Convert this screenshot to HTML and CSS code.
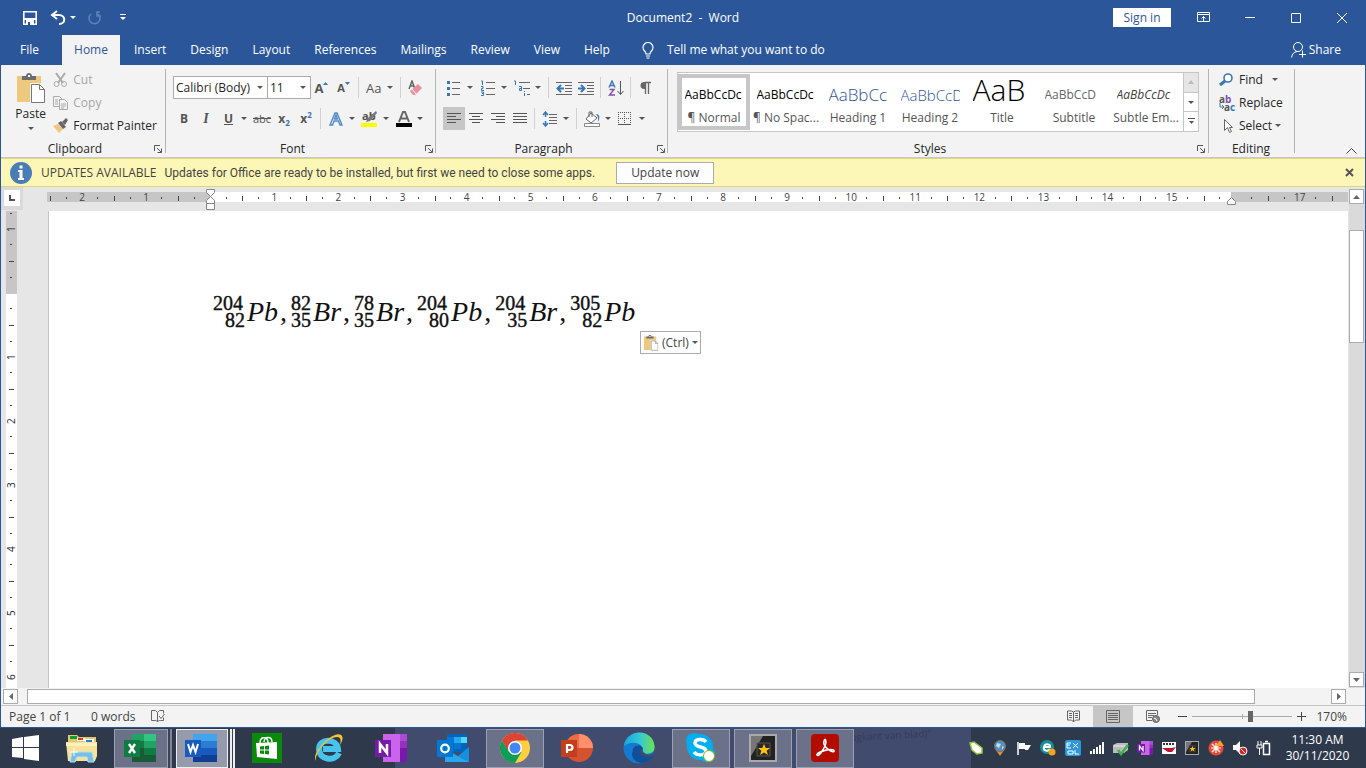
FILE: index.html
```html
<!DOCTYPE html>
<html lang="en">
<head>
<meta charset="utf-8">
<title>Document2 - Word</title>
<link rel="stylesheet" href="styles.css">
</head>
<body>
<svg class="defs" aria-hidden="true">
  <symbol id="launch" viewBox="0 0 8 8"><path d="M.5 6V.5H6M3 3l4 4M7.500 3.500v4h-4" fill="none" stroke="#555"/></symbol>
  <symbol id="clip" viewBox="0 0 28 31"><path d="M0 3h24v26H0z" fill="#edc87e"/><path d="M5 7V3h4c0-4 6-4 6 0h4v4z" fill="#6d6d6d"/><path d="M11 2h2v2h-2z" fill="#fff"/><path d="M13 10h11l5 5v17H13z" fill="#f3f3f3"/><path d="M14.500 11.500h8l5 5v13h-13z" fill="#fff" stroke="#777"/><path d="M22.500 11.500v5h5" fill="none" stroke="#777"/></symbol>
  <symbol id="note" viewBox="0 0 32 28"><path d="M8 0h24v28H8z" fill="#ca64ea"/><path d="M25 0h7v7h-7z" fill="#ae4bd5"/><path d="M25 7h7v7h-7z" fill="#9332bf"/><path d="M25 14h7v14h-7z" fill="#7719aa"/><path d="M0 6h16v17H0z" fill="#7719aa"/><path d="M5 19V10l7 9v-9" fill="none" stroke="#fff" stroke-width="2.500"/></symbol>
  <symbol id="photo" viewBox="0 0 28 28"><path d="M0 0h28v28H0z" fill="#aaa"/><path d="M2 2h24v24H2z" fill="#222"/><path d="M2 2h12L2 22z" fill="#777"/><path d="M8 9h13v13H8z" fill="#292929" stroke="#555"/><path d="m15 10 1.700 4H21l-3.400 2.800L19 21l-4-2.500L11 21l1.400-4.200L9 14h4.300z" fill="#ffc20e"/></symbol>
</svg>

<div class="window">
  <header class="titlebar">
    <div class="quick">
      <button aria-label="Save"><svg width="14" height="14"><path d="M.8.800h12.400v12.400H.8z" fill="none" stroke="#fff" stroke-width="1.600"/><path d="M1 7h12v2H1z" fill="#fff"/><path d="M3 9h8v5H3z" fill="#fff"/><path d="M5 11h2v3H5z" fill="#2b579a"/></svg></button>
      <button aria-label="Undo" class="undo"><svg width="26" height="16"><path d="M7 1 2 5l5 4M2 5h7c7 0 7 9 0 9" fill="none" stroke="#fff" stroke-width="2"/><path d="M20 6h6l-3 3z" fill="#fff"/></svg></button>
      <button aria-label="Repeat" class="redo"><svg width="14" height="14"><path d="M3 3a5.500 5.500 0 1 0 7 0M12 1H9v4h4" fill="none" stroke="#5f80b5" stroke-width="1.600"/></svg></button>
      <button aria-label="Customize quick access toolbar"><svg width="6" height="7"><path d="M0 0h6v1H0zM0 3h6L3 6z" fill="#fff"/></svg></button>
    </div>
    <h1 class="doc-name">Document2&nbsp; -&nbsp; Word</h1>
    <div class="wincontrols">
      <button class="signin">Sign in</button>
      <button aria-label="Ribbon display options" class="ribbon-opts"><svg width="13" height="11"><path d="M.5.500h12v9H.5zM.5 2.500h12M6.500 9V4.500M4.500 6.500l2-2 2 2" fill="none" stroke="#fff"/></svg></button>
      <button aria-label="Minimize"><svg width="10" height="10"><path d="M0 4.500h10" stroke="#fff"/></svg></button>
      <button aria-label="Maximize"><svg width="10" height="10"><path d="M.5.500h9v9h-9z" fill="none" stroke="#fff"/></svg></button>
      <button aria-label="Close"><svg width="10" height="10"><path d="m0 0 10 10M10 0 0 10" stroke="#fff"/></svg></button>
    </div>
  </header>

  <nav class="tabs">
    <button class="file">File</button><button class="active">Home</button><button>Insert</button><button>Design</button><button>Layout</button><button>References</button><button>Mailings</button><button>Review</button><button>View</button><button>Help</button>
    <button class="tell"><svg width="12" height="17"><path d="M4 12c0-3-3-3-3-6.500a5 5 0 0 1 10 0C11 9 8 9 8 12zM4 14h4M4.500 16h3" fill="none" stroke="#fff" stroke-width="1.200"/></svg>Tell me what you want to do</button>
    <button class="share"><svg width="15" height="16"><circle cx="7" cy="5" r="4.500" fill="none" stroke="#fff"/><path d="M.5 15.500C1 12 3 10 6 9.500M11.500 8.500v7M8 12.500h7" fill="none" stroke="#fff"/></svg>Share</button>
  </nav>

  <div class="ribbon">
    <section class="group clipboard">
      <div class="body">
        <button class="paste"><svg width="28" height="31"><use href="#clip"/></svg><span>Paste</span><i class="caret"></i></button>
        <div class="stack">
          <button class="off"><svg width="16" height="16"><path d="M3 1l7 10M12 1 5 11" stroke="#aaa" stroke-width="2"/><circle cx="3.500" cy="12" r="2.500" fill="none" stroke="#aaa"/><circle cx="11" cy="12" r="2.500" fill="none" stroke="#aaa"/></svg>Cut</button>
          <button class="off"><svg width="16" height="16"><path d="M.5 1.500h6l2 2v8h-8z" fill="#f3f3f3" stroke="#aaa"/><path d="M6.500 4.500h5l3 3v7h-8z" fill="#f3f3f3" stroke="#aaa"/><path d="M2 5h3M2 7h3M2 9h3M8 9h5M8 11h5M8 13h3" stroke="#aaa"/></svg>Copy</button>
          <button><svg width="16" height="16"><path d="m0 8 5-2 5 5-4 4z" fill="#edc87e"/><path d="m5 5 3-2 5 6-3 2zM9 4l4-4 2 2-3 5z" fill="#666"/></svg>Format Painter</button>
        </div>
      </div>
      <footer><span>Clipboard</span><svg width="8" height="8"><use href="#launch"/></svg></footer>
    </section>

    <section class="group font">
      <div class="body rows">
        <div class="row">
          <label class="combo family"><select aria-label="Font"><option>Calibri (Body)</option></select><i class="caret"></i></label>
          <label class="combo size"><select aria-label="Font size"><option>11</option></select><i class="caret"></i></label>
          <button class="tool grow" aria-label="Increase font size"><b>A</b><svg width="6" height="12"><path d="M0 3h5L2.500 0z" fill="#3a76b5"/></svg></button>
          <button class="tool shrink" aria-label="Decrease font size"><b>A</b><svg width="6" height="12"><path d="M0 0h5L2.500 3z" fill="#3a76b5"/></svg></button>
          <i class="sep"></i>
          <button class="tool drop case"><span>Aa</span><i class="caret"></i></button>
          <i class="sep"></i>
          <button class="tool" aria-label="Clear formatting"><svg width="16" height="16"><path d="m1 9 3-8 3 8M2 6h4" fill="none" stroke="#666" stroke-width="1.500"/><path d="m2 11 8-7 4 4-7 7H5z" fill="#ea8e98"/><path d="m4 9 4 5" stroke="#fff"/></svg></button>
        </div>
        <div class="row">
          <button class="tool"><b>B</b></button><button class="tool ital"><b>I</b></button><button class="tool drop under"><b>U</b><i class="caret"></i></button>
          <button class="tool strike">abc</button><button class="tool script"><b>x<sub>2</sub></b></button><button class="tool script"><b>x<sup>2</sup></b></button>
          <i class="sep"></i>
          <button class="tool drop" aria-label="Text effects"><svg width="16" height="16"><path d="m2 14 5-12h2l5 12h-2l-1.500-4H6L4.500 14zm4.500-6h3L8 4z" fill="#fff" stroke="#4e8ac8" stroke-width="1.400"/></svg><i class="caret"></i></button>
          <button class="tool drop" aria-label="Highlight colour"><span class="ab">ab</span><svg width="16" height="16"><path d="m15 0-8 7-2 4 4-1 7-8z" fill="#777"/><path d="M0 12h16v4H0z" fill="#ff0"/></svg><i class="caret"></i></button>
          <button class="tool drop" aria-label="Font colour"><svg width="16" height="16"><path d="m3 11 4-10h2l4 10M5 7.500h6" fill="none" stroke="#666" stroke-width="2"/><path d="M0 12h16v4H0z"/></svg><i class="caret"></i></button>
        </div>
      </div>
      <footer><span>Font</span><svg width="8" height="8"><use href="#launch"/></svg></footer>
    </section>

    <section class="group para">
      <div class="body rows">
        <div class="row">
          <button class="tool drop" aria-label="Bullets"><svg width="16" height="16"><path d="M6 2.500h8M6 8.500h8M6 14.500h8" stroke="#666"/><path d="M1 1h3v3H1zM1 7h3v3H1zM1 13h3v3H1z" fill="#3a76b5"/></svg><i class="caret"></i></button>
          <button class="tool drop" aria-label="Numbering"><svg width="16" height="16"><path d="M6 2.500h9M6 8.500h9M6 14.500h9" stroke="#666"/><path d="M1 1h1.500v4M1 6.500h2v2H1.500v2H4M1 12h2.500v3.500H1M2 13.500h1" fill="none" stroke="#3a76b5"/></svg><i class="caret"></i></button>
          <button class="tool drop" aria-label="Multilevel list"><svg width="16" height="16"><path d="M5 2.500h11M9 8.500h7M13 14.500h3" stroke="#666"/><path d="M0 1h1.500v4M5 6.500h2.500v4H5.500v-2h2M10.500 11v1M10.500 13v3" fill="none" stroke="#3a76b5"/></svg><i class="caret"></i></button>
          <i class="sep"></i>
          <button class="tool" aria-label="Decrease indent"><svg width="16" height="16"><path d="M0 2.500h16M9 5.500h7M9 8.500h7M9 11.500h7M0 14.500h16" stroke="#666"/><path d="M8 8.500H2M5 5 1.500 8.500 5 12" fill="none" stroke="#3a76b5" stroke-width="2"/></svg></button>
          <button class="tool" aria-label="Increase indent"><svg width="16" height="16"><path d="M0 2.500h16M9 5.500h7M9 8.500h7M9 11.500h7M0 14.500h16" stroke="#666"/><path d="M0 8.500h6M3 5l3.500 3.500L3 12" fill="none" stroke="#3a76b5" stroke-width="2"/></svg></button>
          <i class="sep"></i>
          <button class="tool" aria-label="Sort"><svg width="16" height="16"><path d="M1 7.500 4 1l3 6.500M2 5.500h4" fill="none" stroke="#3a76b5" stroke-width="1.400"/><path d="M1.500 9.500H6L1.500 15H7" fill="none" stroke="#8052a8" stroke-width="1.400"/><path d="M12.500 1v13M9.500 11l3 3.500 3-3.500" fill="none" stroke="#555"/></svg></button>
          <i class="sep"></i>
          <button class="tool" aria-label="Show paragraph marks"><svg width="12" height="14"><path d="M11 1.500H5M5.500 1v12M8.500 1v12" stroke="#666" stroke-width="1.300"/><path d="M6 1H4a3 3 0 0 0 0 7h2z" fill="#666"/></svg></button>
        </div>
        <div class="row">
          <button class="tool selected" aria-label="Align left"><svg width="14" height="14"><path d="M0 1.500h14M0 4.500h9M0 7.500h14M0 10.500h9" stroke="#555"/></svg></button>
          <button class="tool" aria-label="Centre"><svg width="14" height="14"><path d="M0 1.500h14M3 4.500h8M0 7.500h14M3 10.500h8" stroke="#555"/></svg></button>
          <button class="tool" aria-label="Align right"><svg width="14" height="14"><path d="M0 1.500h14M5 4.500h9M0 7.500h14M5 10.500h9" stroke="#555"/></svg></button>
          <button class="tool" aria-label="Justify"><svg width="14" height="14"><path d="M0 1.500h14M0 4.500h14M0 7.500h14M0 10.500h14" stroke="#555"/></svg></button>
          <i class="sep"></i>
          <button class="tool drop" aria-label="Line spacing"><svg width="16" height="16"><path d="M7 3.500h8M7 6.500h8M7 9.500h8M7 12.500h8" stroke="#666"/><path d="M3.500 1v5M3.500 10v5M1 4l2.500-3L6 4M1 12l2.500 3L6 12" fill="none" stroke="#3a76b5" stroke-width="1.500"/></svg><i class="caret"></i></button>
          <i class="sep"></i>
          <button class="tool drop" aria-label="Shading"><svg width="16" height="16"><path d="m7 2-5 6 5 4 6-5z" fill="#fff" stroke="#666"/><path d="M5 6V1h3v5" fill="none" stroke="#666"/><path d="M12 3c4 0 4 4 2 8V6z" fill="#3a76b5"/><path d="M.5 12.500h15v3H.5z" fill="#fff" stroke="#888"/></svg><i class="caret"></i></button>
          <button class="tool drop" aria-label="Borders"><svg width="14" height="14"><path d="M.5 0v12M6.500 0v12M12.500 0v12M0 .5h13M0 6.500h13" stroke="#555" stroke-dasharray="1 1"/><path d="M0 12.500h13" stroke="#555"/></svg><i class="caret"></i></button>
        </div>
      </div>
      <footer><span>Paragraph</span><svg width="8" height="8"><use href="#launch"/></svg></footer>
    </section>

    <section class="group styles">
      <div class="body">
        <div class="gallery">
          <button class="style chosen"><span class="sample">AaBbCcDc</span><span class="name">¶ Normal</span></button>
          <button class="style"><span class="sample">AaBbCcDc</span><span class="name">¶ No Spac...</span></button>
          <button class="style"><span class="sample h1">AaBbCc</span><span class="name">Heading 1</span></button>
          <button class="style"><span class="sample h2">AaBbCcD</span><span class="name">Heading 2</span></button>
          <button class="style"><span class="sample title">AaB</span><span class="name">Title</span></button>
          <button class="style"><span class="sample subtitle">AaBbCcD</span><span class="name">Subtitle</span></button>
          <button class="style"><span class="sample emph">AaBbCcDc</span><span class="name">Subtle Em...</span></button>
          <div class="spin">
            <button disabled aria-label="Previous styles"><svg width="6" height="4"><path d="M0 4h6L3 0z" fill="#bbb"/></svg></button>
            <button aria-label="Next styles"><i class="caret"></i></button>
            <button aria-label="More styles"><svg width="7" height="7"><path d="M0 .5h7" stroke="#555"/><path d="M1 3h5L3.500 6z" fill="#555"/></svg></button>
          </div>
        </div>
      </div>
      <footer><span>Styles</span><svg width="8" height="8"><use href="#launch"/></svg></footer>
    </section>

    <section class="group editing">
      <div class="body stack">
        <button><svg width="16" height="16"><circle cx="9" cy="6" r="4" fill="#fff" stroke="#3a76b5" stroke-width="1.600"/><path d="m1 13 5-4" stroke="#3a76b5" stroke-width="3"/></svg>Find<i class="caret far"></i></button>
        <button><span class="repl" aria-hidden="true"><b>a<em>b</em></b><b class="low"><svg width="5" height="7"><path d="M1 0v4h3M3 2l2 2-2 2" fill="none" stroke="#3a76b5"/></svg>a<em class="blue">c</em></b></span>Replace</button>
        <button><svg width="16" height="16"><path d="M5.500 1.500v11l3-3 2 5 2-1-2-4h3z" fill="#fff" stroke="#666"/></svg>Select<i class="caret near"></i></button>
      </div>
      <footer><span>Editing</span></footer>
    </section>
    <button class="collapse" aria-label="Collapse the ribbon"><svg width="11" height="6"><path d="m.5 5.500 5-5 5 5" fill="none" stroke="#444"/></svg></button>
  </div>

  <div class="notice">
    <svg width="22" height="22"><circle cx="11" cy="11" r="11" fill="#4a7db5"/><path d="M9.500 3.500h3v3h-3zM8 8h4.500v8H14v2H8v-2h1.500v-6H8z" fill="#fff"/></svg>
    <strong>UPDATES AVAILABLE</strong>
    <span class="message">Updates for Office are ready to be installed, but first we need to close some apps.</span>
    <button class="update">Update now</button>
    <button class="dismiss" aria-label="Dismiss"><svg width="9" height="9"><path d="m1 1 7 7M8 1 1 8" stroke="#555" stroke-width="2"/></svg></button>
  </div>

  <main class="workspace">
    <div class="left">
      <div class="corner"><button aria-label="Tab stop"><svg width="6" height="6"><path d="M1 0v5h5" fill="none" stroke="#555" stroke-width="2"/></svg></button></div>
      <div class="vruler"><span class="first">1</span><span></span><span>1</span><span>2</span><span>3</span><span>4</span><span>5</span><span>6</span></div>
    </div>
    <div class="center">
      <div class="hruler">
        <div class="scale"><span>2</span><span>1</span><span class="blank"></span><span>1</span><span>2</span><span>3</span><span>4</span><span>5</span><span>6</span><span>7</span><span>8</span><span>9</span><span>10</span><span>11</span><span>12</span><span>13</span><span>14</span><span>15</span><span class="blank"></span><span>17</span><i></i></div>
        <svg class="indent-left" width="9" height="22"><path d="M.5.500h8v3l-4 4-4-4zM.5 14.500v-3l4-4 4 4v3zM.5 14.500h8v6h-8z" fill="#fff" stroke="#888"/></svg>
        <svg class="indent-right" width="9" height="8"><path d="M.5 7.500v-3l4-4 4 4v3z" fill="#fff" stroke="#888"/></svg>
      </div>
      <article class="page">
        <p class="formula">
          <span class="nuclide"><span class="idx wide"><span>204</span><span>82</span></span><i>Pb</i>,</span>
          <span class="nuclide"><span class="idx"><span>82</span><span>35</span></span><i>Br</i>,</span>
          <span class="nuclide"><span class="idx"><span>78</span><span>35</span></span><i>Br</i>,</span>
          <span class="nuclide"><span class="idx wide"><span>204</span><span>80</span></span><i>Pb</i>,</span>
          <span class="nuclide"><span class="idx wide"><span>204</span><span>35</span></span><i>Br</i>,</span>
          <span class="nuclide"><span class="idx wide"><span>305</span><span>82</span></span><i>Pb</i></span>
        </p>
        <button class="paste-options"><svg width="16" height="16" viewBox="0 0 28 31"><use href="#clip"/></svg>(Ctrl)<i class="caret"></i></button>
      </article>
    </div>
    <div class="vscroll"><button aria-label="Scroll up"><svg width="7" height="4"><path d="M0 4h7L3.500 0z" fill="#666"/></svg></button><div class="thumb"></div><button aria-label="Scroll down"><svg width="7" height="4"><path d="M0 0h7L3.500 4z" fill="#666"/></svg></button></div>
  </main>
  <div class="hscroll"><button aria-label="Scroll left"><svg width="4" height="7"><path d="M4 0v7L0 3.500z" fill="#666"/></svg></button><div class="thumb"></div><button aria-label="Scroll right"><svg width="4" height="7"><path d="M0 0v7l4-3.500z" fill="#666"/></svg></button></div>

  <footer class="status">
    <span class="pages">Page 1 of 1</span><span class="words">0 words</span>
    <svg width="14" height="13"><path d="M6.500 11.500V2.500l-2-2h-4v10h4zM6.500 2.500l2-2h4v3M6.500 11.500l2-1h1M8 6l2 2.500L13.500 4M12.500 7.500v3h-3" fill="none" stroke="#666"/></svg>
    <div class="views">
      <button aria-label="Read mode"><svg width="13" height="13"><path d="M6.500 12V2l-2-1h-4v9h4zM6.500 2l2-1h4v9h-4l-2 2M2 3.500h3M2 5.500h3M2 7.500h3M8 3.500h3M8 5.500h3M8 7.500h3" fill="none" stroke="#666"/></svg></button>
      <button class="on" aria-label="Print layout"><svg width="14" height="13"><path d="M.5.500h13v12H.5zM2 3.500h10M2 5.500h10M2 7.500h10M2 9.500h10" fill="none" stroke="#666"/></svg></button>
      <button aria-label="Web layout"><svg width="14" height="13"><path d="M6 10.500H.5V.500h11V5M2 3.500h8M2 5.500h6M2 7.500h4" fill="none" stroke="#666"/><circle cx="10" cy="9" r="3.500" fill="#888" stroke="#666"/><path d="m8 8 2 1 1 2" stroke="#fff" fill="none"/></svg></button>
    </div>
    <button class="zoomstep" aria-label="Zoom out"><svg width="9" height="9"><path d="M0 4.500h9" stroke="#444"/></svg></button>
    <input type="range" min="10" max="220" value="132" aria-label="Zoom">
    <button class="zoomstep" aria-label="Zoom in"><svg width="9" height="9"><path d="M0 4.500h9M4.500 0v9" stroke="#444"/></svg></button>
    <span class="percent">170%</span>
  </footer>
</div>

<nav class="taskbar">
  <span class="ghost" aria-hidden="true">rugkant van blad)"</span>
  <button class="start" aria-label="Start"><svg width="27" height="26"><path d="M0 4l11-2v10H0zM12 2l15-2v12H12zM0 13h11v10L0 22zM12 13h15v13l-15-2z" fill="#fff"/></svg></button>
  <button class="app" aria-label="File Explorer"><svg width="33" height="29"><path d="M3 8V1h9l2 2h17v22H3z" fill="#e5c869"/><path d="M5 2h7v3H5z" fill="#0a9b3c"/><path d="M12 4h8v3h-8z" fill="#fff"/><path d="M13 4h5v2h-5z" fill="#d8382f"/><path d="M20 5h9v4h-9z" fill="#fff"/><path d="M21 6h6v2h-6z" fill="#2f7fd0"/><path d="M1 8h31v14l-2 5H3z" fill="#f6e29a"/><path d="M1 9h31v3H1z" fill="#fcf0bd"/><path d="M5 28l2-10h20l2 10h-6l-1-5H12l-2 5z" fill="#79bfe4" stroke="#b9e3f5"/><path d="M9 14v8M5 18h8" stroke="#fff"/></svg></button>
  <button class="app open stack1" aria-label="Excel"><svg width="32" height="28"><path d="M8 0h24v28H8z" fill="#185c37"/><path d="M8 0h12v7H8z" fill="#21a366"/><path d="M20 0h12v7H20z" fill="#33c481"/><path d="M8 7h12v7H8z" fill="#107c41"/><path d="M20 7h12v7H20z" fill="#21a366"/><path d="M20 14h12v7H20z" fill="#107c41"/><path d="M0 6h16v17H0z" fill="#107c41"/><path d="m5 10 6 9M11 10l-6 9" stroke="#fff" stroke-width="2.400"/></svg></button>
  <button class="app open focus stack2" aria-label="Word"><svg width="32" height="28"><path d="M8 0h24v7H8z" fill="#41a5ee"/><path d="M8 7h24v7H8z" fill="#2b7cd3"/><path d="M8 14h24v7H8z" fill="#185abd"/><path d="M8 21h24v7H8z" fill="#103f91"/><path d="M0 6h16v17H0z" fill="#185abd"/><path d="m3 10 2.500 8L8 11l2.500 7L13 10" fill="none" stroke="#fff" stroke-width="2"/></svg></button>
  <button class="app" aria-label="Store"><svg width="30" height="30"><path d="M0 0h30v30H0z" fill="#0a8a0a"/><path d="M4 10l21-1v17L5 24z" fill="#fff"/><path d="M8 10c0-7 8-7 8 0M12 9c0-6 8-6 8 0" fill="none" stroke="#fff" stroke-width="1.400"/><path d="M8 13.500l4-.5v3.500H8zM13 13l4-.5v4h-4zM8 17.500h4V21l-4-.5zM13 17.500h4v4l-4-.5z" fill="#0a8a0a"/></svg></button>
  <button class="app" aria-label="Internet Explorer"><svg width="32" height="32"><path d="M26 21c-4 9-20 7-20-4S24 6 25 17H10" fill="none" stroke="#48c3ee" stroke-width="6"/><path d="M3 29C-3 22 20-2 28 3c3 2 1 7-1 10 1-5 1-8-3-8C14 5 1 23 3 29z" fill="#f5c52a"/></svg></button>
  <button class="app" aria-label="OneNote"><svg width="32" height="28"><use href="#note"/></svg></button>
  <button class="app" aria-label="Outlook"><svg width="32" height="28"><path d="M10 0h20v18H10z" fill="#0364b8"/><path d="M10 3h7v6h-7zM17 9h7v6h-7z" fill="#0078d4"/><path d="M17 3h7v6h-7z" fill="#28a8ea"/><path d="M24 3h6v6h-6z" fill="#50d9ff"/><path d="M8 14l13 8 11-9v15H8z" fill="#1490df"/><path d="M8 28V16l24 12z" fill="#28a8ea"/><path d="M0 6h16v17H0z" fill="#0078d4"/><circle cx="8" cy="14.500" r="3.800" fill="none" stroke="#fff" stroke-width="2.200"/></svg></button>
  <button class="app open" aria-label="Chrome"><svg width="30" height="30"><circle cx="15" cy="15" r="15" fill="#ffcd40"/><path d="M2 7.500A15 15 0 0 1 28 7.500H15L8 18z" fill="#db4437"/><path d="M2 7.500A15 15 0 0 0 15 30l6.500-11-6.500-3-6.500 2z" fill="#0f9d58"/><circle cx="15" cy="15" r="7" fill="#fff"/><circle cx="15" cy="15" r="5.500" fill="#4285f4"/></svg></button>
  <button class="app" aria-label="PowerPoint"><svg width="32" height="28"><circle cx="18" cy="14" r="14" fill="#d35230"/><path d="M18 0a14 14 0 0 1 14 14H18z" fill="#ff8f6b"/><path d="M18 0a14 14 0 0 0-14 14h14z" fill="#ed6c47"/><path d="M0 6h16v17H0z" fill="#c43e1c"/><path d="M6 19v-8h2.500c4 0 4 5 0 5H6" fill="none" stroke="#fff" stroke-width="2.200"/></svg></button>
  <button class="app" aria-label="Edge"><svg width="32" height="32"><defs><linearGradient id="edge"><stop stop-color="#1ba5dc"/><stop offset=".5" stop-color="#33c6d8"/><stop offset="1" stop-color="#6fe34e"/></linearGradient></defs><circle cx="16" cy="16" r="15.500" fill="#147ad0"/><path d="M1 14C3-4 30-4 31.500 14c1 7-6 9-12 7 3-9-9-14-18.500-7z" fill="url(#edge)"/><path d="M10 16c4-4 9-3 10 1-3 3-1 8 11 6-6 11-20 10-22 0z" fill="#104f9a"/><path d="M18 16c3 7 8 9 14 4l-1 4c-10 3-16-2-13-8z" fill="#414b6d"/></svg></button>
  <button class="app open" aria-label="Skype"><svg width="30" height="30"><circle cx="8" cy="8" r="8" fill="#00aff0"/><circle cx="14" cy="14" r="13" fill="#00aff0"/><circle cx="21" cy="21" r="8" fill="#00aff0"/><path d="M20 9C17 5 9 6 9 10c0 5 11 3 11 8 0 5-9 5-12 1" fill="none" stroke="#fff" stroke-width="3.500"/><circle cx="23" cy="23" r="5.500" fill="#fff" stroke="#7fba00"/></svg></button>
  <button class="app open" aria-label="Photo viewer"><svg width="28" height="28"><use href="#photo"/></svg></button>
  <button class="app open" aria-label="Acrobat"><svg width="28" height="28"><rect width="28" height="28" rx="4" fill="#b30b00"/><path d="M6 21c-1-3 17-8 17-4 0 3-12-4-10-10 1-4 3 0 1 5-2 4-6 11-8 9z" fill="none" stroke="#fff" stroke-width="1.600"/></svg></button>
  <div class="tray">
    <svg width="16" height="16"><path d="M2 3l4-1 4 3 4 3v5l-5 1-5-4z" fill="#fff" stroke="#94c83d" stroke-width="1.500"/></svg>
    <svg width="16" height="16"><path d="M8 16 3 9h10z" fill="#e28c2d"/><circle cx="8" cy="6" r="5.500" fill="#4c91d2" stroke="#8d6b43"/><path d="m5 3 4 1-2 4-3-2zM10 6l2 1-2 3z" fill="#c4dce9"/></svg>
    <svg width="16" height="16"><path d="M2 2v13" stroke="#fff" stroke-width="1.500"/><path d="M3 3h6v6H3zM9 5h6l-3 5H9z" fill="#fff"/></svg>
    <svg width="16" height="16"><circle cx="7" cy="7" r="7" fill="#168f99"/><path d="M10 9c-2 3-7 2-6-2s7-3 6 0H4" fill="none" stroke="#fff" stroke-width="2"/><circle cx="12" cy="12" r="3.500" fill="#f5a51b"/></svg>
    <svg width="16" height="16"><rect width="16" height="16" rx="2" fill="#2a98d9"/><path d="M2 3h4M2 5h3M2 8h4M2 3v5M8 3l5 5M13 3 8 8M3 11h5v3H3zM10 10v4h4" fill="none" stroke="#fff"/></svg>
    <svg width="16" height="16"><path d="M1 11h2v3H1zM4 9h2v5H4zM7 7h2v7H7zM10 5h2v9h-2zM13 2h2v12h-2z" fill="#fff"/></svg>
    <svg width="16" height="16"><path d="M0 5l4-2h11v7l-4 3H0z" fill="#bbb"/><path d="M1 6h11" stroke="#eee"/><path d="m5 10 3 4 7-9" fill="none" stroke="#3fb34b" stroke-width="2.500"/></svg>
    <svg width="16" height="16" viewBox="0 0 32 28"><use href="#note"/></svg>
    <svg width="16" height="16"><path d="M1 2h14v12H1z" fill="#fff"/><path d="M2 4h12" stroke="#333" stroke-width="2" stroke-dasharray="2 1"/><path d="M1 8h10l4-1-4 5H7z" fill="#b91630"/></svg>
    <svg width="14" height="14" viewBox="0 0 28 28"><use href="#photo"/></svg>
    <svg width="16" height="16"><circle cx="8" cy="8" r="7.500" fill="#e64b35"/><path d="M3 8h10M8 3v10M4 4l8 8M12 4l-8 8" stroke="#fff" stroke-width="1.200"/><path d="m12 0 4 6H8z" fill="#f8a12b"/></svg>
    <svg width="16" height="16"><path d="M1 5h3l4-4v13l-4-4H1z" fill="#fff"/><circle cx="11" cy="11" r="4" fill="#d3262a" stroke="#fff"/><path d="m9 9 4 4" stroke="#fff"/></svg>
    <svg width="16" height="16"><path d="M7.500 3.500h6v11h-6zM9 1.500h3" fill="none" stroke="#fff" stroke-width="1.500"/><path d="M2 1v4M5 1v4M1 5h5v3H1zM3.500 8v7" stroke="#fff" fill="none"/></svg>
  </div>
  <time class="clock"><span>11:30 AM</span><span>30/11/2020</span></time>
</nav>
</body>
</html>
```
FILE: styles.css
```css
* { box-sizing: border-box; }
body { margin: 0; height: 100vh; display: flex; flex-direction: column; overflow: hidden; font: 12px/16px "Open Sans", "Noto Sans", sans-serif; color: #262626; }
button, select, input { font: inherit; color: inherit; margin: 0; padding: 0; border: 0; background: none; }
svg { display: block; flex: none; }
.defs { position: absolute; width: 0; height: 0; }
.caret { flex: none; width: 0; height: 0; border: 3px solid transparent; border-top-color: #555; border-bottom: 0; }
.window { flex: 1; min-height: 0; display: flex; flex-direction: column; background: #f3f3f3; border: 1px solid #2b579a; border-top: 0; }

/* Title bar and tabs */
.titlebar { display: grid; grid-template-columns: 1fr auto 1fr; align-items: center; height: 35px; background: #2b579a; color: #fff; }
.quick { display: flex; align-items: center; padding-left: 22px; gap: 13px; }
.redo { margin-left: -1px; margin-right: 5px; }
.doc-name { margin: 0; font-size: 12px; font-weight: 400; }
.wincontrols { display: flex; justify-content: flex-end; align-items: center; height: 33px; }
.wincontrols button { width: 46px; height: 33px; display: flex; align-items: center; justify-content: center; }
.wincontrols .signin { width: 58px; height: 19px; margin-right: 8px; background: #fff; color: #2b579a; }
.wincontrols .ribbon-opts { width: 48px; }
.tabs { display: flex; height: 30px; background: #2b579a; color: #fff; }
.tabs button { padding: 0 12px; white-space: nowrap; }
.tabs .file { width: 61px; padding: 0 4px 0 0; }
.tabs .active { width: 58px; padding: 0; margin-right: 2px; background: #f3f3f3; color: #2b579a; }
.tabs .tell, .tabs .share { display: flex; align-items: center; gap: 13px; }
.tabs .tell { padding-left: 20px; }
.tabs .share { margin-left: auto; gap: 3px; padding-right: 24px; }

/* Ribbon */
.ribbon { display: flex; height: 93px; border-bottom: 1px solid #c8c8c8; }
.group { position: relative; display: flex; flex-direction: column; padding: 3px 8px 0; margin: 4px 0; border-right: 1px solid #b4b4b4; }
.group .body { flex: 1; display: flex; }
.group footer { flex: none; display: flex; align-items: center; justify-content: center; height: 8px; margin-right: -5px; }
.group footer span { flex: 1; text-align: center; padding-right: 13px; }
.group.editing footer span { padding-right: 6px; }
.clipboard { width: 165px; }
.font { width: 270px; }
.para { width: 232px; }
.styles { width: 541px; }
.editing { width: 86px; }
.paste { display: flex; flex-direction: column; align-items: center; width: 44px; padding-top: 1px; }
.paste span { padding: 2px 0 5px; }
.stack { display: flex; flex-direction: column; }
.stack button { display: flex; align-items: center; gap: 4px; height: 23px; white-space: nowrap; margin-top: -4px; margin-bottom: 4px; }
.clipboard .stack { padding-left: 1px; }
.stack .off { color: #a6a6a6; }
.group .rows { flex-direction: column; gap: 8px; padding-top: 4px; }
.row { display: flex; align-items: center; height: 23px; }
.font, .para { padding-left: 7px; padding-right: 7px; }
.combo { display: flex; align-items: center; height: 23px; padding-right: 4px; border: 1px solid #ababab; background: #fff; }
.combo select { flex: 1; min-width: 0; appearance: none; padding-left: 2px; }
.family { width: 95px; }
.size { width: 43px; border-left: 0; }
.tool { flex: none; width: 22px; height: 23px; display: flex; align-items: center; justify-content: center; color: #555; }
.drop { width: 34px; justify-content: flex-start; padding-left: 3px; gap: 4px; }
.drop .caret { margin-left: auto; margin-right: 4px; }
.selected { background: #c6c6c6; }
.sep { flex: none; width: 1px; height: 21px; margin: 0 4px 0 3px; background: #d0d0d0; }
.grow b { font-size: 13px; }
.shrink b { font-size: 11px; }
.ital { font-family: "Liberation Serif", serif; font-style: italic; font-size: 14px; }
.under { padding-left: 7px; }
.under b { text-decoration: underline; }
.strike { font-size: 11px; text-decoration: line-through; }
.script sub, .script sup { font-size: 8px; line-height: 0; color: #3a76b5; }
.case { font-size: 13px; }
.ab { font-size: 11px; font-weight: 700; line-height: 10px; height: 16px; margin-right: -19px; }
.gallery { display: flex; height: 60px; border: 1px solid #c6c6c6; background: #fff; width: 522px; }
.styles .body { padding-left: 1px; }
.style { display: flex; flex-direction: column; align-items: center; width: 72px; height: 56px; padding: 0 2px; margin-top: 1px; border: 4px solid transparent; white-space: nowrap; }
.chosen { border-color: #c6c6c6; }
.sample { width: 59px; height: 32px; line-height: 34px; overflow: hidden; text-align: left; color: #000; }
.name { color: #555; line-height: 16px; }
.h1, .h2 { color: #2f5496; font-weight: 300; }
.h1 { font-size: 17px; }
.h2 { font-size: 15px; }
.title { font-size: 30px; line-height: 24px; font-weight: 300; }
.subtitle { color: #666; }
.emph { font-style: italic; color: #404040; }
.spin { display: flex; flex-direction: column; width: 15px; margin-left: auto; border-left: 1px solid #c6c6c6; }
.spin button { flex: 1; display: flex; align-items: center; justify-content: center; border-bottom: 1px solid #c6c6c6; }
.spin button:last-child { border-bottom: 0; }
.spin button:disabled { background: #e6e6e6; }
.editing .stack { padding-left: 2px; }
.editing .far { margin-left: 5px; }
.editing .near { margin-left: -1px; }
.repl { width: 16px; font-size: 10px; line-height: 8px; color: #555; text-align: left; }
.repl b { display: block; }
.repl .low { display: flex; }
.repl em { font-style: normal; color: #8052a8; }
.repl .blue { color: #3a76b5; }
.collapse { margin: auto 8px 3px auto; }

/* Update notice */
.notice { display: flex; align-items: center; height: 29px; padding: 0 11px 0 9px; border: solid #dcd680; border-width: 1px 0; background: #fcf7b6; color: #444; white-space: nowrap; }
.notice strong { font-weight: 400; margin: 0 8px 0 9px; }
.message { font-family: Roboto, "Open Sans", sans-serif; }
.update { width: 98px; height: 22px; margin-left: 21px; border: 1px solid #ababab; background: #fdfdfd; }
.dismiss { margin-left: auto; }

/* Document area */
.workspace { flex: 1; min-height: 0; display: flex; background: #e6e6e6; }
.left { display: flex; flex-direction: column; width: 46px; }
.corner { flex: none; width: 22px; height: 23px; padding: 3px; background: #dadada; }
.corner button { width: 16px; height: 16px; background: #fff; display: grid; place-items: center; }
.vruler { flex: 1; overflow: hidden; width: 11px; margin-left: 5px; margin-top: 1px; background: linear-gradient(#c6c6c6 83px, #fff 83px); }
.vruler span { display: flex; align-items: center; justify-content: center; width: 100%; height: 64px; font-size: 10px; line-height: 11px; writing-mode: vertical-rl; transform: rotate(180deg); background: linear-gradient(#444, #444) 50% 100% / 5px 1px no-repeat, linear-gradient(#444, #444) 50% 25% / 2px 1px no-repeat, linear-gradient(#444, #444) 50% 75% / 2px 1px no-repeat; }
.vruler .first { margin-top: -14px; }
.center { flex: 1; min-width: 0; display: flex; flex-direction: column; }
.hruler { position: relative; height: 24px; padding-top: 5px; }
.scale { display: flex; height: 10px; padding-left: 3px; background: linear-gradient(90deg, #c6c6c6 12.5%, #fff 12.5% 91%, #c6c6c6 91%); font-size: 10px; line-height: 11px; color: #444; }
.scale span { flex: 1; text-align: center; }
.scale span, .scale i { background: linear-gradient(#444, #444) 0 70% / 1px 5px no-repeat, linear-gradient(#444, #444) 25% 60% / 1px 2px no-repeat, linear-gradient(#444, #444) 75% 60% / 1px 2px no-repeat; }
.scale i { width: 16px; background-size: 1px 5px, 0 0, 0 0; }
.indent-left, .indent-right { position: absolute; top: 2px; left: 12.2%; }
.indent-right { top: 10px; left: 90.7%; }
.page { flex: 1; min-height: 0; margin-left: 1px; padding: 84px 164px 0; border-left: 1px solid #c6c6c6; background: #fff; overflow: hidden; }
.formula { display: flex; gap: 4px; margin: 0; color: #111; font: 28px/34px "Liberation Serif", serif; }
.nuclide { display: flex; align-items: center; }
.nuclide i { margin-left: 2px; margin-right: 2px; }
.idx { display: flex; flex-direction: column; font-size: 20px; line-height: 17px; -webkit-text-stroke: thin #111; }
.wide { align-items: flex-end; }
.wide span:first-child { padding-right: 2px; }
.paste-options { display: flex; align-items: center; gap: 3px; margin: 2px 0 0 427px; height: 23px; padding: 0 2px; border: 1px solid #ababab; background: #fdfdfd; color: #444; }
.vscroll { display: flex; flex-direction: column; width: 16px; padding-top: 2px; margin-left: 1px; background: linear-gradient(#dadada, #dadada) 0 2px no-repeat; }
.vscroll button, .hscroll button { flex: none; display: grid; place-items: center; width: 15px; height: 15px; border: 1px solid #ababab; background: #fff; }
.vscroll button:last-child { margin-bottom: 1px; }
.vscroll .thumb { height: 113px; margin-top: 26px; margin-bottom: auto; width: 15px; border: 1px solid #ababab; background: #fff; }
.hscroll { display: flex; height: 18px; padding: 1px 19px 0 2px; border-bottom: 1px solid #c6c6c6; background: #dadada content-box #e6e6e6; }
.hscroll .thumb { flex: 1; height: 15px; margin: 0 76px 0 9px; border: 1px solid #ababab; background: #fff; }

/* Status bar */
.status { flex: none; display: flex; align-items: center; height: 21px; padding: 0 18px 0 8px; color: #444; }
.pages { width: 82px; }
.words { width: 60px; }
.views { display: flex; height: 100%; margin-left: auto; margin-right: 5px; }
.views button { width: 40px; display: grid; place-items: center; }
.views .on { background: #c6c6c6; }
.status input { width: 100px; height: 12px; margin: 0 5px; appearance: none; background: linear-gradient(#aaa, #aaa) 0 50% / 100% 1px no-repeat, linear-gradient(#aaa, #aaa) 50% 50% / 1px 5px no-repeat; }
.status input::-webkit-slider-thumb { appearance: none; width: 5px; height: 11px; background: #666; }
.percent { margin-left: 10px; }

/* Taskbar */
.taskbar { position: relative; flex: none; display: flex; align-items: center; height: 40px; background: linear-gradient(90deg, #2f394c 395px, #414b6d 395px 971px, #2f394c 971px); color: #fff; }
.ghost { position: absolute; left: 846px; top: -1px; font-size: 10px; color: #343c5a; transform: rotate(-3deg); }
.taskbar .start { width: 50px; height: 40px; display: grid; place-items: center; }
.app { position: relative; width: 58px; height: 39px; margin: 0 2px; display: flex; align-items: center; justify-content: center; }
.open { border: 1px solid #9aa1b3; background: #6a7189; }
.focus { border-color: #eee; background: #959bab; }
.stack1, .stack2 { padding-right: 3px; }
.stack1 { width: 54px; margin-right: 6px; box-shadow: 2px 0 #3a4355, 4px 0 #7e869a; }
.stack2 { width: 52px; margin-right: 8px; box-shadow: 2px 0 #3a4355, 4px 0 #eee, 5px 0 #3a4355, 7px 0 #eee; }
.tray { display: flex; align-items: center; justify-content: space-between; width: 304px; margin-left: auto; margin-right: 13px; }
.clock { display: flex; flex-direction: column; width: 65px; margin-right: 16px; text-align: center; white-space: nowrap; align-items: center; }
```
